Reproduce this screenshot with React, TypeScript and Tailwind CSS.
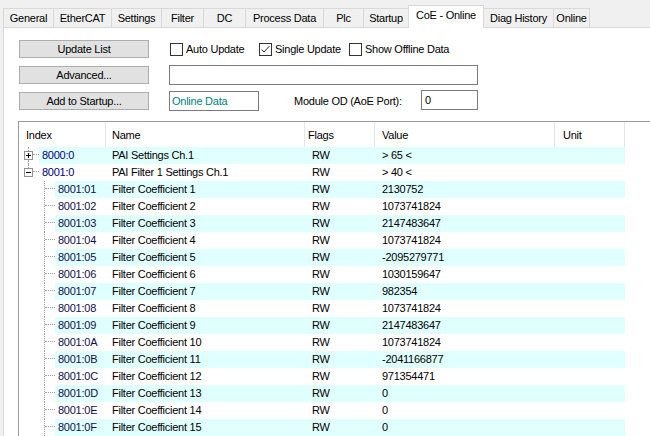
const TABS = [
  { label: 'General', w: 51 },
  { label: 'EtherCAT', w: 59 },
  { label: 'Settings', w: 51 },
  { label: 'Filter', w: 43 },
  { label: 'DC', w: 43 },
  { label: 'Process Data', w: 79 },
  { label: 'Plc', w: 41 },
  { label: 'Startup', w: 46 },
  { label: 'CoE - Online', w: 76, active: true },
  { label: 'Diag History', w: 71 },
  { label: 'Online', w: 37 },
]

const TOP = [
  { index: '8000:0', name: 'PAI Settings Ch.1', flags: 'RW', value: '> 65 <', open: false },
  { index: '8001:0', name: 'PAI Filter 1 Settings Ch.1', flags: 'RW', value: '> 40 <', open: true },
]

const VALUES = [
  '2130752',
  '1073741824',
  '2147483647',
  '1073741824',
  '-2095279771',
  '1030159647',
  '982354',
  '1073741824',
  '2147483647',
  '1073741824',
  '-2041166877',
  '971354471',
  '0',
  '0',
  '0',
]

const CHILDREN = VALUES.map((value, i) => ({
  index: '8001:' + (i + 1).toString(16).toUpperCase().padStart(2, '0'),
  name: 'Filter Coefficient ' + (i + 1),
  flags: 'RW',
  value,
}))

function ExpandBox({ open }: { open: boolean }) {
  return (
    <svg width="9" height="9" viewBox="0 0 9 9" className="block">
      <rect x="0.5" y="0.5" width="8" height="8" fill="#fff" stroke="#919191" />
      <path d="M2 4.5h5" stroke="#000" />
      {!open && <path d="M4.5 2v5" stroke="#000" />}
    </svg>
  )
}

function CheckBox({ checked, label, w }: { checked?: boolean; label: string; w?: number }) {
  return (
    <div className="flex items-center gap-[3px]" style={w ? { width: w } : undefined}>
      <div className="w-[13px] h-[13px] border border-[#333] bg-white flex items-center justify-center">
        {checked && (
          <svg width="11" height="11" viewBox="0 0 11 11">
            <path d="M1.5 5.5l2.5 2.5 5.5-6" fill="none" stroke="#333" strokeWidth="1" />
          </svg>
        )}
      </div>
      <span>{label}</span>
    </div>
  )
}

function Button({ children }: { children: React.ReactNode }) {
  return (
    <div className="w-[130px] h-[18px] bg-[#e1e1e1] border border-[#adadad] flex items-center justify-center">
      {children}
    </div>
  )
}

function RowCells({ name, flags, value, tint }: { name: string; flags: string; value: string; tint: string }) {
  return (
    <>
      <div className={`w-[199px] pl-[6px] flex items-center ${tint}`}>{name}</div>
      <div className={`w-[70px] pl-[7px] flex items-center ${tint}`}>{flags}</div>
      <div className={`w-[180px] pl-[7px] flex items-center ${tint}`}>{value}</div>
      <div className={`w-[70px] ${tint}`} />
    </>
  )
}

export default function App() {
  return (
    <div className="w-[650px] h-[436px] overflow-hidden bg-[#f0f0f0] text-[11px] tracking-[-0.25px] text-black font-['Liberation_Sans',Arial,sans-serif]">
      {/* Tab strip */}
      <div className="flex items-end h-[27px] pl-[3px]">
        {TABS.map((t, i) =>
          t.active ? (
            <div
              key={t.label}
              className="relative z-10 -ml-px -mb-px h-[23px] bg-white border border-b-0 border-[#d9d9d9] flex items-center justify-center pb-[3px]"
              style={{ width: t.w }}
            >
              {t.label}
            </div>
          ) : (
            <div
              key={t.label}
              className={`h-[19px] bg-[#f0f0f0] border border-b-0 border-[#d9d9d9] flex items-center justify-center ${i === 0 ? '' : '-ml-px'}`}
              style={{ width: t.w }}
            >
              {t.label}
            </div>
          ),
        )}
      </div>

      {/* Tab panel */}
      <div className="ml-[3px] h-[409px] bg-white border-l border-t border-[#d9d9d9]">
        {/* Controls */}
        <div className="pl-[15px] pt-[12px]">
          <div className="flex items-center h-[18px]">
            <Button>Update List</Button>
            <div className="ml-[21px] flex items-center">
              <CheckBox label="Auto Update" w={89} />
              <CheckBox label="Single Update" checked w={90} />
              <CheckBox label="Show Offline Data" />
            </div>
          </div>
          <div className="flex items-center h-[20px] mt-[7px]">
            <Button>Advanced...</Button>
            <div className="ml-[20px] w-[309px] h-[20px] border border-[#7a7a7a] bg-white" />
          </div>
          <div className="flex items-center h-[20px] mt-[6px]">
            <Button>Add to Startup...</Button>
            <div className="ml-[20px] w-[90px] h-[20px] border border-[#7a7a7a] bg-white flex items-center pl-[2px] text-[#008080]">
              Online Data
            </div>
            <div className="ml-[35px] w-[127px]">Module OD (AoE Port):</div>
            <div className="w-[57px] h-[20px] -mt-[2px] border border-[#7a7a7a] bg-white flex items-center pl-[3px]">
              0
            </div>
          </div>
        </div>

        {/* Object list */}
        <div className="ml-[14px] mt-[10px] h-[316px] border-l border-t border-[#9a9a9a] overflow-hidden">
          <div className="flex h-[25px] bg-white">
            <div className="w-[87px] pl-[7px] pt-px flex items-center border-r border-[#e5e5e5]">Index</div>
            <div className="w-[199px] pl-[6px] pt-px flex items-center border-r border-[#e5e5e5]">Name</div>
            <div className="w-[70px] pl-[3px] pt-px flex items-center border-r border-[#e5e5e5]">Flags</div>
            <div className="w-[180px] pl-[7px] pt-px flex items-center border-r border-[#e5e5e5]">Value</div>
            <div className="w-[70px] pl-[8px] pt-px flex items-center border-r border-[#e5e5e5]">Unit</div>
          </div>

          {TOP.map((r, i) => {
            const tint = i % 2 === 0 ? 'bg-[#e0ffff]' : 'bg-white'
            return (
              <div key={r.index} className="flex h-[17px]">
                <div className="w-[87px] flex items-stretch pl-[5px]">
                  <div className="w-[9px] flex flex-col">
                    <div className="w-[5px] h-[4px] border-r border-dotted border-[#a0a0a0]" />
                    <ExpandBox open={r.open} />
                    <div
                      className={`w-[5px] flex-1 border-r border-dotted ${i === 0 ? 'border-[#a0a0a0]' : 'border-transparent'}`}
                    />
                  </div>
                  <div className="w-[6px]">
                    <div className="h-[8px] border-b border-dotted border-[#a0a0a0]" />
                  </div>
                  <div className={`flex-1 pl-[3px] flex items-center text-[#000080] ${tint}`}>{r.index}</div>
                </div>
                <RowCells name={r.name} flags={r.flags} value={r.value} tint={tint} />
              </div>
            )
          })}

          {CHILDREN.map((r, i) => {
            const tint = i % 2 === 0 ? 'bg-[#e0ffff]' : 'bg-white'
            return (
              <div key={r.index} className="flex h-[17px]">
                <div className="w-[87px] flex items-stretch pl-[25px]">
                  <div className="w-[11px] border-l border-dotted border-[#a0a0a0]">
                    <div className="h-[8px] border-b border-dotted border-[#a0a0a0]" />
                  </div>
                  <div className={`flex-1 pl-[3px] flex items-center text-[#10104a] ${tint}`}>{r.index}</div>
                </div>
                <RowCells name={r.name} flags={r.flags} value={r.value} tint={tint} />
              </div>
            )
          })}
        </div>
      </div>
    </div>
  )
}
